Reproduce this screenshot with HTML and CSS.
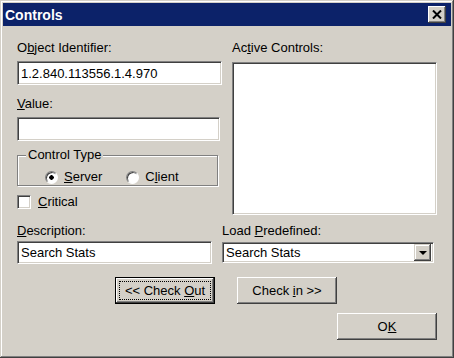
FILE: index.html
```html
<!DOCTYPE html>
<html lang="en">
<head>
    <meta charset="UTF-8">
    <title>Controls</title>
    <link rel="stylesheet" href="styles.css">
</head>
<body>
    <div class="window">
        <div class="titlebar">
            <span class="title">Controls</span>
            <button class="close-btn" type="button">
                <svg width="10" height="9" viewBox="0 0 10 9">
                    <path d="M1 0.5 L9 8.5 M9 0.5 L1 8.5" stroke="#000" stroke-width="2" fill="none"/>
                </svg>
            </button>
        </div>

        <div class="content">
            <div class="top">
                <div class="col-left">
                    <label class="lbl" for="oid">O<u>b</u>ject Identifier:</label>
                    <input class="field oid" id="oid" type="text" value="1.2.840.113556.1.4.970">

                    <label class="lbl value-lbl" for="val"><u>V</u>alue:</label>
                    <input class="field val" id="val" type="text">

                    <fieldset class="group">
                        <legend>Control Type</legend>
                        <div class="radios">
                            <label class="radio"><input type="radio" name="ctype" checked><span><u>S</u>erver</span></label>
                            <label class="radio client"><input type="radio" name="ctype"><span>C<u>l</u>ient</span></label>
                        </div>
                    </fieldset>

                    <label class="check"><input type="checkbox"><span><u>C</u>ritical</span></label>
                </div>

                <div class="col-right">
                    <label class="lbl">Ac<u>t</u>ive Controls:</label>
                    <div class="listbox"></div>
                </div>
            </div>

            <div class="mid">
                <div>
                    <label class="lbl" for="desc"><u>D</u>escription:</label>
                    <input class="field desc" id="desc" type="text" value="Search Stats">
                </div>
                <div>
                    <label class="lbl">Load <u>P</u>redefined:</label>
                    <div class="combo">
                        <span class="combo-text">Search Stats</span>
                        <span class="combo-btn"><span class="arrow"></span></span>
                    </div>
                </div>
            </div>

            <div class="actions">
                <button class="btn default" type="button">&lt;&lt; Check <u>O</u>ut</button>
                <button class="btn" type="button">Check <u>i</u>n &gt;&gt;</button>
            </div>

            <div class="ok-row">
                <button class="btn" type="button">O<u>K</u></button>
            </div>
        </div>
    </div>
</body>
</html>
```

FILE: styles.css
```css
* {
    margin: 0;
    padding: 0;
    box-sizing: border-box;
}

body {
    font-family: "Liberation Sans", Arial, sans-serif;
    font-size: 13px;
    color: #000;
    background: #d4d0c8;
}

u {
    text-decoration: underline;
    text-underline-offset: 1px;
}

.window {
    width: 454px;
    height: 358px;
    padding: 3px;
    background: #d4d0c8;
    box-shadow: inset -1px -1px #404040, inset 1px 1px #d4d0c8,
                inset -2px -2px #808080, inset 2px 2px #fff;
}

.titlebar {
    height: 23px;
    background: #0c2269;
    color: #fff;
    display: flex;
    align-items: center;
    justify-content: space-between;
    padding: 0 5px 0 2px;
}

.title {
    font-weight: bold;
    font-size: 14px;
}

.close-btn {
    width: 18px;
    height: 17px;
    display: flex;
    align-items: center;
    justify-content: center;
    background: #d4d0c8;
    border: none;
    box-shadow: inset -1px -1px #404040, inset 1px 1px #fff,
                inset -2px -2px #808080, inset 2px 2px #d4d0c8;
}

.content {
    padding: 14px 14px 0 14px;
}

.top {
    display: grid;
    grid-template-columns: 205px 205px;
    column-gap: 10px;
}

.lbl {
    display: block;
    height: 16px;
    line-height: 16px;
}

.field {
    display: block;
    height: 24px;
    margin-top: 5px;
    padding: 0 3px;
    font: inherit;
    background: #fff;
    border: 1px solid;
    border-color: #808080 #fff #fff #808080;
    box-shadow: inset 1px 1px #404040, inset -1px -1px #d4d0c8;
    outline: none;
}

.oid {
    width: 205px;
}

.value-lbl {
    margin-top: 11px;
}

.val {
    width: 203px;
}

.group {
    width: 201px;
    height: 39px;
    margin-top: 6px;
    border: 1px solid #808080;
    box-shadow: inset 1px 1px #fff, 1px 1px #fff;
    padding: 0;
}

.group legend {
    margin-left: 8px;
    padding: 0 2px;
    line-height: 16px;
    background: #d4d0c8;
}

.radios {
    display: flex;
    align-items: center;
    height: 30px;
    padding-left: 27px;
    padding-bottom: 2px;
}

.radio, .check {
    display: flex;
    align-items: center;
    gap: 6px;
    line-height: 16px;
}

.radio.client {
    margin-left: 24px;
}

.radio input {
    appearance: none;
    width: 13px;
    height: 13px;
    border-radius: 50%;
    background: #fff;
    border: 1px solid;
    border-color: #808080 #fff #fff #808080;
    box-shadow: inset 1px 1px #404040;
}

.radio input:checked {
    background: radial-gradient(circle at 50% 50%, #000 0, #000 2px, #fff 2.5px);
}

.check {
    margin-top: 8px;
    gap: 7px;
}

.check input {
    appearance: none;
    width: 14px;
    height: 14px;
    background: #fff;
    border: 1px solid;
    border-color: #808080 #fff #fff #808080;
    box-shadow: inset 1px 1px #404040, inset -1px -1px #d4d0c8;
}

.listbox {
    margin-top: 6px;
    height: 153px;
    background: #fff;
    border: 1px solid;
    border-color: #808080 #fff #fff #808080;
    box-shadow: inset 1px 1px #404040, inset -1px -1px #d4d0c8;
}

.mid {
    display: grid;
    grid-template-columns: 195px 212px;
    column-gap: 10px;
    margin-top: 8px;
}

.desc {
    width: 195px;
    height: 23px;
    margin-top: 2px;
}

.combo {
    margin-top: 3px;
    height: 21px;
    display: flex;
    align-items: center;
    justify-content: space-between;
    padding: 2px 2px 2px 3px;
    background: #fff;
    border: 1px solid;
    border-color: #808080 #fff #fff #808080;
    box-shadow: inset 1px 1px #404040, inset -1px -1px #d4d0c8;
}

.combo-btn {
    width: 17px;
    height: 17px;
    display: flex;
    align-items: center;
    justify-content: center;
    background: #d4d0c8;
    box-shadow: inset -1px -1px #404040, inset 1px 1px #d4d0c8,
                inset -2px -2px #808080, inset 2px 2px #fff;
}

.arrow {
    width: 0;
    height: 0;
    border-left: 4px solid transparent;
    border-right: 4px solid transparent;
    border-top: 4px solid #000;
    margin-top: 1px;
}

.actions {
    display: flex;
    gap: 22px;
    padding-left: 98px;
    margin-top: 13px;
}

.btn {
    width: 100px;
    height: 27px;
    font: inherit;
    color: #000;
    background: #d4d0c8;
    border: none;
    box-shadow: inset -1px -1px #404040, inset 1px 1px #fff,
                inset -2px -2px #808080, inset 2px 2px #d4d0c8;
}

.btn.default {
    box-shadow: inset 0 0 0 1px #000, inset -2px -2px #404040,
                inset 2px 2px #fff, inset -3px -3px #808080;
    outline: 1px dotted #000;
    outline-offset: -5px;
}

.ok-row {
    display: flex;
    justify-content: flex-end;
    margin-top: 9px;
}
```
